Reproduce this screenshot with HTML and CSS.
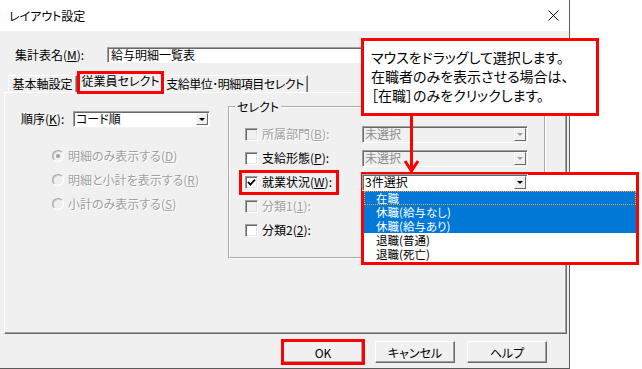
FILE: index.html
```html
<!DOCTYPE html>
<html lang="ja">
<head>
    <meta charset="UTF-8">
    <title>レイアウト設定</title>
    <link rel="stylesheet" href="styles.css">
</head>
<body>
    <div class="screen">
        <div class="window">
            <div class="titlebar">
                <span class="title">レイアウト設定</span>
                <svg class="close" width="11" height="11" viewBox="0 0 11 11">
                    <path d="M0.5 0.5 L10.5 10.5 M10.5 0.5 L0.5 10.5" stroke="#000" stroke-width="1" fill="none"/>
                </svg>
            </div>

            <div class="dialog">
                <!-- 集計表名 -->
                <div class="name-row">
                    <label class="name-label">集計表名(<u>M</u>):</label>
                    <div class="textbox">給与明細一覧表</div>
                </div>

                <!-- タブ -->
                <div class="tabs">
                    <div class="tab tab-base">基本軸設定</div>
                    <div class="tab tab-staff active">従業員セレクト</div>
                    <div class="tab tab-pay">支給単位･明細項目セレクト</div>
                </div>

                <div class="panel">
                    <div class="left-col">
                        <div class="order-row">
                            <label class="order-label">順序(<u>K</u>):</label>
                            <div class="combo combo-order">
                                <span class="combo-text">コード順</span>
                                <span class="drop"><i></i></span>
                            </div>
                        </div>
                        <div class="radios">
                            <div class="radio-row">
                                <span class="radio on"></span>
                                <span class="dis">明細のみ表示する(<u>D</u>)</span>
                            </div>
                            <div class="radio-row">
                                <span class="radio"></span>
                                <span class="dis">明細と小計を表示する(<u>R</u>)</span>
                            </div>
                            <div class="radio-row">
                                <span class="radio"></span>
                                <span class="dis">小計のみ表示する(<u>S</u>)</span>
                            </div>
                        </div>
                    </div>

                    <fieldset class="group">
                        <legend>セレクト</legend>
                        <div class="select-grid">
                            <div class="check disabled"><span class="box"></span><span class="dis">所属部門(<u>B</u>):</span></div>
                            <div class="combo combo-sel disabled"><span class="combo-text">未選択</span><span class="drop"><i></i></span></div>

                            <div class="check"><span class="box"></span><span>支給形態(<u>P</u>):</span></div>
                            <div class="combo combo-sel disabled"><span class="combo-text">未選択</span><span class="drop"><i></i></span></div>

                            <div class="check marked">
                                <span class="box">
                                    <svg width="11" height="11" viewBox="0 0 11 11"><path d="M2 5 L4.3 7.6 L9 2.6" stroke="#000" stroke-width="1.8" fill="none"/></svg>
                                </span>
                                <span>就業状況(<u>W</u>):</span>
                            </div>
                            <div class="combo combo-sel combo-open"><span class="combo-text">3件選択</span><span class="drop"><i></i></span></div>

                            <div class="check disabled"><span class="box"></span><span class="dis">分類1(<u>1</u>):</span></div>
                            <div></div>

                            <div class="check"><span class="box"></span><span>分類2(<u>2</u>):</span></div>
                            <div></div>
                        </div>
                    </fieldset>
                </div>

                <div class="buttons">
                    <button class="btn btn-ok">OK</button>
                    <button class="btn">キャンセル</button>
                    <button class="btn">ヘルプ</button>
                </div>
            </div>
        </div>

        <!-- 説明の吹き出し -->
        <div class="callout">
            <p>マウスをドラッグして選択します。</p>
            <p>在職者のみを表示させる場合は、</p>
            <p>［在職］のみをクリックします。</p>
        </div>
        <svg class="arrow" width="17" height="58" viewBox="0 0 17 58">
            <path d="M8.5 0 V55" stroke="#f00" stroke-width="3" fill="none"/>
            <path d="M2 45 L8.5 55 L15 45" stroke="#f00" stroke-width="3" fill="none"/>
        </svg>

        <!-- ドロップダウン一覧 -->
        <div class="pick-mark">
            <ul class="droplist">
                <li class="sel focus">在職</li>
                <li class="sel">休職(給与なし)</li>
                <li class="sel">休職(給与あり)</li>
                <li>退職(普通)</li>
                <li>退職(死亡)</li>
            </ul>
        </div>
    </div>
</body>
</html>
```

FILE: styles.css
```css
:root {
    --face: #f0f0f0;
    --shadow: #a0a0a0;
    --dark: #696969;
    --mark: #ff0000;
    --select: #0078d7;
}

* {
    box-sizing: border-box;
    margin: 0;
    padding: 0;
}

body {
    width: 642px;
    height: 369px;
    overflow: hidden;
    background: #fff;
    color: #000;
    font-family: "Noto Sans CJK JP", "Noto Sans", sans-serif;
    font-size: 12px;
    font-feature-settings: "palt";
    line-height: 14px;
}

u {
    text-decoration: underline;
    text-underline-offset: 1px;
}

.screen {
    position: relative;
    width: 642px;
    height: 369px;
}

/* ウィンドウ */
.window {
    width: 570px;
    height: 369px;
    background: var(--face);
    border-right: 1px solid #5a5a5a;
    border-bottom: 1px solid #5a5a5a;
    display: flex;
    flex-direction: column;
}

.titlebar {
    height: 31px;
    background: #fff;
    display: flex;
    align-items: center;
    justify-content: space-between;
    padding: 0 10px 0 9px;
}

.dialog {
    flex: 1;
    padding: 16px 2px 0 4px;
}

/* 集計表名 */
.name-row {
    display: flex;
    align-items: center;
    height: 16px;
    padding-left: 11px;
}

.name-label {
    width: 92px;
}

.textbox {
    width: 438px;
    height: 16px;
    background: #fff;
    border: 1px solid;
    border-color: var(--shadow) #fff #fff var(--shadow);
    box-shadow: inset 1px 1px var(--dark);
    padding-left: 3px;
    line-height: 14px;
}

/* タブ */
.tabs {
    display: flex;
    align-items: flex-end;
    height: 21px;
    margin-top: 8px;
    padding-left: 4px;
}

.tab {
    height: 17px;
    background: var(--face);
    border-top: 1px solid #fff;
    border-left: 1px solid #fff;
    border-right: 1px solid var(--dark);
    box-shadow: inset -1px 0 var(--shadow);
    text-align: center;
    line-height: 15px;
    white-space: nowrap;
}

.tab-base {
    width: 69px;
}

.tab-staff {
    width: 87px;
}

.tab-pay {
    width: 144px;
    padding-right: 2px;
    letter-spacing: -0.5px;
}

.tab.active {
    position: relative;
    z-index: 1;
    height: 23px;
    margin-bottom: -2px;
    line-height: 17px;
    outline: 3px solid var(--mark);
    outline-offset: -3px;
}

/* タブの中身 */
.panel {
    height: 242px;
    display: flex;
    align-items: flex-start;
    padding: 7px 0 0 16px;
    border-top: 1px solid #fff;
    border-left: 1px solid #fff;
    border-right: 1px solid var(--dark);
    border-bottom: 1px solid var(--dark);
    box-shadow: inset -1px -1px var(--shadow);
}

.left-col {
    width: 207px;
    margin-top: 11px;
}

.order-row {
    display: flex;
    align-items: center;
}

.order-label {
    width: 52px;
}

.combo {
    display: flex;
    background: #fff;
    border: 1px solid;
    border-color: var(--shadow) #fff #fff var(--shadow);
    box-shadow: inset 1px 1px var(--dark);
}

.combo-order {
    width: 137px;
    height: 16px;
}

.combo-text {
    flex: 1;
    padding: 0 0 0 2px;
    line-height: 14px;
}

.drop {
    width: 12px;
    margin: 1px 1px 1px 0;
    background: var(--face);
    border: 1px solid;
    border-color: #fff var(--dark) var(--dark) #fff;
    display: flex;
    align-items: center;
    justify-content: center;
}

.drop i {
    width: 0;
    height: 0;
    border-left: 3px solid transparent;
    border-right: 3px solid transparent;
    border-top: 3px solid #000;
}

.combo.disabled {
    background: var(--face);
    color: #8c8c8c;
}

.combo.disabled .drop i {
    border-top-color: var(--shadow);
}

.radios {
    margin-top: 17px;
    padding-left: 31px;
}

.radio-row {
    display: flex;
    align-items: center;
    gap: 4px;
    height: 24px;
}

.radio {
    width: 12px;
    height: 12px;
    border-radius: 50%;
    border: 1px solid;
    border-color: var(--shadow) #fff #fff var(--shadow);
    box-shadow: inset 1px 1px #d4d4d4;
    background: var(--face);
    display: flex;
    align-items: center;
    justify-content: center;
}

.radio.on::after {
    content: "";
    width: 4px;
    height: 4px;
    border-radius: 50%;
    background: var(--shadow);
}

.dis {
    color: #a0a0a0;
    text-shadow: 1px 1px #fff;
}

/* セレクト枠 */
.group {
    width: 318px;
    height: 159px;
    border: 2px groove #fff;
    padding: 8px 0 0 15px;
}

.group legend {
    margin-left: -10px;
    padding: 0 2px;
    line-height: 14px;
}

.select-grid {
    display: grid;
    grid-template-columns: 117px 166px;
    grid-auto-rows: 24px;
    align-items: center;
}

.check {
    display: flex;
    align-items: center;
    gap: 4px;
    height: 13px;
    white-space: nowrap;
}

.check .box {
    width: 13px;
    height: 13px;
    background: #fff;
    border: 1px solid;
    border-color: var(--shadow) #fff #fff var(--shadow);
    box-shadow: inset 1px 1px var(--dark), inset -1px -1px #e3e3e3;
    display: flex;
    align-items: center;
    justify-content: center;
}

.check.disabled .box {
    background: var(--face);
}

.check.marked {
    width: 88px;
    outline: 3px solid var(--mark);
    outline-offset: 3px;
}

.combo-sel {
    height: 17px;
}

.combo-open {
    position: relative;
    z-index: 2;
}

/* ボタン */
.buttons {
    display: flex;
    justify-content: flex-end;
    gap: 12px;
    margin-top: 7px;
    padding-right: 20px;
}

.btn {
    width: 80px;
    height: 22px;
    background: var(--face);
    border: 1px solid;
    border-color: #fff var(--dark) var(--dark) #fff;
    box-shadow: inset -1px -1px var(--shadow);
    font-family: inherit;
    font-size: 12px;
    font-feature-settings: "palt";
    color: #000;
}

.btn-ok {
    outline: 3px solid var(--mark);
    outline-offset: -1px;
}

/* 吹き出し */
.callout {
    position: absolute;
    left: 361px;
    top: 38px;
    width: 238px;
    height: 78px;
    background: #fff;
    border: 3px solid var(--mark);
    padding: 7px 0 0 7px;
    font-size: 14px;
    line-height: 19px;
    white-space: nowrap;
}

.arrow {
    position: absolute;
    left: 403px;
    top: 116px;
}

/* 一覧 */
.pick-mark {
    position: absolute;
    left: 361px;
    top: 172px;
    width: 278px;
    height: 93px;
    background: #fff;
    border: 3px solid var(--mark);
    padding-top: 16px;
    z-index: 1;
}

.droplist {
    list-style: none;
}

.droplist li {
    height: 14px;
    padding-left: 12px;
    line-height: 14px;
    font-size: 11.5px;
}

.droplist li.sel {
    background: var(--select);
    color: #fff;
}

.droplist li.focus {
    outline: 1px dotted #f5a623;
    outline-offset: -1px;
}
```
